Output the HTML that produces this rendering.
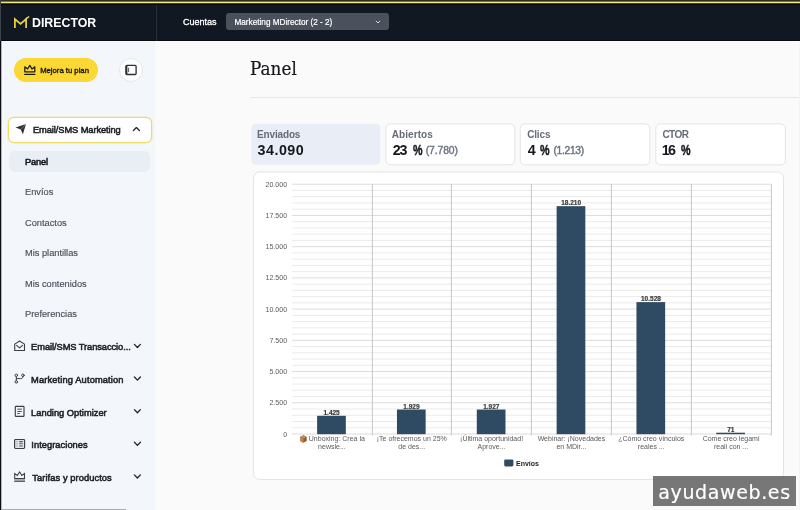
<!DOCTYPE html>
<html lang="es">
<head>
<meta charset="utf-8">
<title>MDirector - Panel</title>
<style>
*{box-sizing:border-box;margin:0;padding:0}
html,body{width:800px;height:510px;overflow:hidden;background:#fafafa}
body{will-change:transform;position:relative;font-family:"Liberation Sans",sans-serif;color:#1f2937;-webkit-font-smoothing:antialiased}
.abs{position:absolute}
.t{position:absolute;white-space:nowrap;line-height:1}
#header{left:0;top:0;width:800px;height:41px;background:#111822;border-bottom:1px solid #080b11}
#topline{left:0;top:0;width:800px;height:5px;background:linear-gradient(to bottom,#302d1d 0,#302d1d 1px,#777145 1px,#777145 2px,#efe790 2px,#efe790 3px,#514800 3px,#514800 4px,#060a05 4px,#060a05 5px)}
#hdiv{left:156px;top:5px;width:1px;height:36px;background:#2a303b}
#sidebar{left:1px;top:41px;width:154.3px;height:469px;background:#f3f6fa}
#leftedge{left:0;top:41px;width:2px;height:469px;background:linear-gradient(to right,#0c0c14 0,#0c0c14 1px,#b4b7bc 1px,#b4b7bc 2px)}
#leftedge2{left:0;top:0;width:1px;height:41px;background:#3d4149}
#select{left:226px;top:13px;width:163px;height:17.3px;background:#4b515c;border-radius:3px}
#upg{left:14px;top:58px;width:84px;height:24px;border-radius:12px;background:#fcd835}
#circ{left:119px;top:58px;width:24px;height:24px;border-radius:12px;background:#fff;border:1px solid #e3e6ea}
#navact{left:8px;top:117px;width:144px;height:26px;border-radius:6px;background:#fff;border:1px solid #f1d964;box-shadow:0 0 0 0.5px rgba(241,217,100,0.55)}
#navsel{left:9px;top:151px;width:141px;height:21px;border-radius:6px;background:#e9eef5}
.sub{font-size:9.25px;color:#4a505a;left:25px;-webkit-text-stroke:0.15px #4a505a;margin-top:0.6px}
.main{font-size:9.3px;color:#1e2126;-webkit-text-stroke:0.55px #1e2126;left:31.5px;margin-top:0.5px}
.cl{font-size:10px;font-weight:bold;color:#656b78;top:130.3px}
.cv{font-size:14.3px;font-weight:bold;color:#14171c;top:142.6px}
.pc{transform-origin:0 0;transform:scaleX(0.75);-webkit-text-stroke:0.45px #14171c}
.cs{font-size:10.3px;color:#6b7280;-webkit-text-stroke:0.4px #6b7280;top:146.4px}
#hr{left:250px;top:97px;width:550px;height:1px;background:#e5e7eb}
#wm{left:653px;top:476px;width:143px;height:30px;background:rgba(100,100,100,0.88)}
#wmt{font-family:"DejaVu Sans","Liberation Sans",sans-serif;font-size:19px;color:#fff;left:658.3px;top:483px;letter-spacing:0.62px;-webkit-text-stroke:0.2px #fff}
#scroll{left:1px;top:509px;width:125px;height:1px;background:#a9abae}
</style>
</head>
<body>
<div class="abs" id="header"></div>
<div class="abs" id="topline"></div>
<div class="abs" id="hdiv"></div>
<div class="abs" id="sidebar"></div>
<div class="abs" id="leftedge"></div>
<div class="abs" id="leftedge2"></div>

<!-- logo -->
<svg class="abs" style="left:13px;top:15px" width="18" height="15" viewBox="0 0 18 15">
 <path d="M1.9 13V4.2L7.5 9L13.1 4.2V13" fill="none" stroke="#f0d643" stroke-width="1.7" stroke-linejoin="miter"/>
 <path d="M12.6 4.1L16.2 1.5" fill="none" stroke="#f0d643" stroke-width="1.5"/>
</svg>
<div class="t" id="logo" style="left:31.5px;top:16.2px;font-size:13.5px;font-weight:bold;color:#fff;transform-origin:0 0;transform:scaleX(0.915)">DIRECTOR</div>

<div class="t" id="cuentas" style="left:183px;top:17.7px;font-size:9px;color:#fff;-webkit-text-stroke:0.3px #fff">Cuentas</div>
<div class="abs" id="select"></div>
<div class="t" id="seltext" style="left:234.5px;top:18.6px;font-size:8.2px;color:#fff;-webkit-text-stroke:0.2px #fff">Marketing MDirector (2 - 2)</div>
<svg class="abs" style="left:375px;top:19.5px" width="6" height="4" viewBox="0 0 6 4"><path d="M0.8 0.8L3 3L5.2 0.8" fill="none" stroke="#e5e7eb" stroke-width="0.9"/></svg>

<!-- upgrade button -->
<div class="abs" id="upg"></div>
<svg class="abs" style="left:24px;top:64px" width="12" height="12" viewBox="0 0 12 12">
 <path d="M0.8 7.8V2.8L3.6 5L5.8 1.4L8 5L10.8 2.8V7.8Z" fill="none" stroke="#17170a" stroke-width="1.2" stroke-linejoin="round"/>
 <path d="M0.2 10.4H11.4" stroke="#17170a" stroke-width="1.2"/>
</svg>
<div class="t" id="upgt" style="left:40.2px;top:66.5px;font-size:7.7px;color:#17170a;-webkit-text-stroke:0.35px #17170a">Mejora tu plan</div>
<div class="abs" id="circ"></div>
<svg class="abs" style="left:125px;top:64px" width="12" height="12" viewBox="0 0 12 12">
 <rect x="0.9" y="1.3" width="10.2" height="9.2" rx="1" fill="none" stroke="#2b2f36" stroke-width="1.3"/>
 <path d="M1.6 1.8V10" stroke="#2b2f36" stroke-width="1.6"/><path d="M3.6 3.7V8.1" stroke="#2b2f36" stroke-width="0.8"/>
</svg>

<!-- nav -->
<div class="abs" id="navact"></div>
<svg class="abs" style="left:15px;top:123px" width="12" height="12" viewBox="0 0 12 12">
 <path d="M0.5 4.5L11 1L7.9 11.2L5.7 6.6Z" fill="#2e3136"/>
 <path d="M5.7 6.6L11 1" stroke="#fff" stroke-opacity="0.55" stroke-width="0.6"/>
</svg>
<div class="t main" id="n0" style="left:33.0px;top:125.5px;letter-spacing:-0.09px">Email/SMS Marketing</div>

<div class="abs" id="navsel"></div>
<div class="t" id="s0" style="left:25.0px;top:157.5px;font-size:9.3px;color:#16181d;-webkit-text-stroke:0.55px #16181d;letter-spacing:-0.20px">Panel</div>
<div class="t sub" id="s1" style="top:187.5px">Envíos</div>
<div class="t sub" id="s2" style="top:218px">Contactos</div>
<div class="t sub" id="s3" style="top:248.5px">Mis plantillas</div>
<div class="t sub" id="s4" style="top:279px">Mis contenidos</div>
<div class="t sub" id="s5" style="top:309.5px">Preferencias</div>

<div class="t main" id="n1" style="left:31.1px;top:342px;letter-spacing:-0.07px">Email/SMS Transaccio...</div>
<div class="t main" id="n2" style="left:31.1px;top:375.5px;letter-spacing:0.13px">Marketing Automation</div>
<div class="t main" id="n3" style="left:31.1px;top:408.0px;letter-spacing:0.01px">Landing Optimizer</div>
<div class="t main" id="n4" style="left:31.3px;top:440.5px;letter-spacing:0.05px">Integraciones</div>
<div class="t main" id="n5" style="left:32.3px;top:473.5px;letter-spacing:0.08px">Tarifas y productos</div>

<!-- nav icons -->
<svg class="abs" id="navicons" style="left:0;top:100px" width="160" height="400" viewBox="0 100 160 400" fill="none" stroke-linecap="round" stroke-linejoin="round">
 <!-- envelope open -->
 <path d="M14.7 344.1L19.6 341L24.5 344.1V350.5H14.7Z" stroke="#3b3e43" stroke-width="1.1"/>
 <path d="M16.6 345.4L19.6 347.9L22.6 345.4" stroke="#3b3e43" stroke-width="1.1"/>
 <!-- branch -->
 <circle cx="16.3" cy="375.3" r="1.25" stroke="#3b3e43" stroke-width="1"/>
 <circle cx="22.9" cy="375.3" r="1.25" stroke="#3b3e43" stroke-width="1"/>
 <circle cx="16.3" cy="381.9" r="1.25" stroke="#3b3e43" stroke-width="1"/>
 <path d="M16.3 376.8V380.5M22.9 376.8C22.9 378.3 22 378.6 20.6 378.6H16.5" stroke="#3b3e43" stroke-width="1"/>
 <!-- landing -->
 <rect x="15.3" y="406.4" width="8.7" height="10" rx="0.7" stroke="#3b3e43" stroke-width="1.15"/>
 <path d="M17.4 409.2H21.8" stroke="#6b6e73" stroke-width="1.3" stroke-linecap="butt"/>
 <path d="M17.4 411.5H21.8M17.4 413.5H19.8" stroke="#3b3e43" stroke-width="0.9" stroke-linecap="butt"/>
 <!-- integraciones -->
 <rect x="14.6" y="439.5" width="10" height="9" rx="0.9" fill="#e4e5e7" stroke="#3b3e43" stroke-width="1.15"/>
 <path d="M16.3 441.6H17.6M16.3 443.8H17.6M16.3 446H17.6" stroke="#9a9da2" stroke-width="1" stroke-linecap="butt"/>
 <path d="M19.2 441.6H22.8M19.2 443.8H22.8M19.2 446H22.8" stroke="#5a5d62" stroke-width="1.1" stroke-linecap="butt"/>
 <!-- crown -->
 <path d="M14.7 478.6V473.6L17.3 475.5L19.6 472L21.9 475.5L24.5 473.6V478.6Z" stroke="#3b3e43" stroke-width="1.05" stroke-linejoin="miter"/>
 <path d="M14.2 479.7H25" stroke="#a9abae" stroke-width="1.2" stroke-linecap="butt"/>
 <path d="M14.2 481.2H25" stroke="#3b3e43" stroke-width="1.2" stroke-linecap="butt"/>
 <!-- chevrons -->
 <path d="M133.4 130.5L136.4 127.6L139.4 130.5" stroke="#22252a" stroke-width="1.35"/>
 <path d="M134.4 344.4L137.4 347.5L140.4 344.4" stroke="#22252a" stroke-width="1.35"/>
 <path d="M134.4 377L137.4 380.1L140.4 377" stroke="#22252a" stroke-width="1.35"/>
 <path d="M134.4 409.65L137.4 412.75L140.4 409.65" stroke="#22252a" stroke-width="1.35"/>
 <path d="M134.4 442.3L137.4 445.4L140.4 442.3" stroke="#22252a" stroke-width="1.35"/>
 <path d="M134.4 474.9L137.4 478L140.4 474.9" stroke="#22252a" stroke-width="1.35"/>
</svg>
<div class="abs" id="scroll"></div>

<!-- main -->
<div class="t" id="title" style="left:250.3px;top:59.8px;font-family:'DejaVu Serif','Liberation Serif',serif;font-size:18px;color:#16181d;-webkit-text-stroke:0.2px #16181d;transform-origin:0 0;transform:scaleX(0.935)">Panel</div>
<div class="abs" id="hr"></div>

<svg class="abs" id="cards" style="left:245px;top:118px" width="550" height="54" viewBox="245 118 550 54">
<rect x="251.5" y="123.8" width="128.8" height="41" rx="4.5" fill="#e9edf5"/>
<rect x="385.9" y="123.9" width="128.9" height="40.9" rx="4.5" fill="#fff" stroke="#e3e4e6" stroke-width="1"/>
<rect x="520.3" y="123.9" width="129.5" height="40.9" rx="4.5" fill="#fff" stroke="#e3e4e6" stroke-width="1"/>
<rect x="655.8" y="123.9" width="129.6" height="40.9" rx="4.5" fill="#fff" stroke="#e3e4e6" stroke-width="1"/>
</svg>
<div class="t cl" id="cl0" style="left:257.0px;letter-spacing:-0.15px">Enviados</div>
<div class="t cv" id="cv0" style="left:257.6px;letter-spacing:0.48px">34.090</div>
<div class="t cl" id="cl1" style="left:391.8px;letter-spacing:0.06px">Abiertos</div>
<div class="t cv" id="cv1" style="left:392.7px;letter-spacing:-1.18px">23</div><div class="t cv pc" id="cp1" style="left:412.5px">%</div>
<div class="t cs" id="cs1" style="left:425.7px;letter-spacing:-0.07px">(7.780)</div>
<div class="t cl" id="cl2" style="left:527.2px;letter-spacing:-0.16px">Clics</div>
<div class="t cv" id="cv2" style="left:527.7px">4</div><div class="t cv pc" id="cp2" style="left:539.5px">%</div>
<div class="t cs" id="cs2" style="left:553.5px;letter-spacing:-0.32px">(1.213)</div>
<div class="t cl" id="cl3" style="left:662.4px;letter-spacing:-0.53px">CTOR</div>
<div class="t cv" id="cv3" style="left:661.8px;letter-spacing:-1.82px">16</div><div class="t cv pc" id="cp3" style="left:681.3px">%</div>

<!--CHART-->
<svg class="abs" id="plot" style="left:250px;top:168px" width="540" height="316" viewBox="250 168 540 316" font-family="Liberation Sans, sans-serif">
<rect x="253.5" y="172" width="530" height="307.5" rx="6" fill="#fff" stroke="#e2e3e5" stroke-width="1"/>
<rect x="292.0" y="183.70" width="479.0" height="1" fill="#dcdcdc"/>
<rect x="292.0" y="189.94" width="479.0" height="1" fill="#ebebeb"/>
<rect x="292.0" y="196.19" width="479.0" height="1" fill="#ebebeb"/>
<rect x="292.0" y="202.44" width="479.0" height="1" fill="#ebebeb"/>
<rect x="292.0" y="208.68" width="479.0" height="1" fill="#ebebeb"/>
<rect x="292.0" y="214.92" width="479.0" height="1" fill="#dcdcdc"/>
<rect x="292.0" y="221.17" width="479.0" height="1" fill="#ebebeb"/>
<rect x="292.0" y="227.41" width="479.0" height="1" fill="#ebebeb"/>
<rect x="292.0" y="233.66" width="479.0" height="1" fill="#ebebeb"/>
<rect x="292.0" y="239.91" width="479.0" height="1" fill="#ebebeb"/>
<rect x="292.0" y="246.15" width="479.0" height="1" fill="#dcdcdc"/>
<rect x="292.0" y="252.39" width="479.0" height="1" fill="#ebebeb"/>
<rect x="292.0" y="258.64" width="479.0" height="1" fill="#ebebeb"/>
<rect x="292.0" y="264.88" width="479.0" height="1" fill="#ebebeb"/>
<rect x="292.0" y="271.13" width="479.0" height="1" fill="#ebebeb"/>
<rect x="292.0" y="277.38" width="479.0" height="1" fill="#dcdcdc"/>
<rect x="292.0" y="283.62" width="479.0" height="1" fill="#ebebeb"/>
<rect x="292.0" y="289.87" width="479.0" height="1" fill="#ebebeb"/>
<rect x="292.0" y="296.11" width="479.0" height="1" fill="#ebebeb"/>
<rect x="292.0" y="302.36" width="479.0" height="1" fill="#ebebeb"/>
<rect x="292.0" y="308.60" width="479.0" height="1" fill="#dcdcdc"/>
<rect x="292.0" y="314.85" width="479.0" height="1" fill="#ebebeb"/>
<rect x="292.0" y="321.09" width="479.0" height="1" fill="#ebebeb"/>
<rect x="292.0" y="327.34" width="479.0" height="1" fill="#ebebeb"/>
<rect x="292.0" y="333.58" width="479.0" height="1" fill="#ebebeb"/>
<rect x="292.0" y="339.82" width="479.0" height="1" fill="#dcdcdc"/>
<rect x="292.0" y="346.07" width="479.0" height="1" fill="#ebebeb"/>
<rect x="292.0" y="352.31" width="479.0" height="1" fill="#ebebeb"/>
<rect x="292.0" y="358.56" width="479.0" height="1" fill="#ebebeb"/>
<rect x="292.0" y="364.81" width="479.0" height="1" fill="#ebebeb"/>
<rect x="292.0" y="371.05" width="479.0" height="1" fill="#dcdcdc"/>
<rect x="292.0" y="377.29" width="479.0" height="1" fill="#ebebeb"/>
<rect x="292.0" y="383.54" width="479.0" height="1" fill="#ebebeb"/>
<rect x="292.0" y="389.78" width="479.0" height="1" fill="#ebebeb"/>
<rect x="292.0" y="396.03" width="479.0" height="1" fill="#ebebeb"/>
<rect x="292.0" y="402.27" width="479.0" height="1" fill="#dcdcdc"/>
<rect x="292.0" y="408.52" width="479.0" height="1" fill="#ebebeb"/>
<rect x="292.0" y="414.76" width="479.0" height="1" fill="#ebebeb"/>
<rect x="292.0" y="421.01" width="479.0" height="1" fill="#ebebeb"/>
<rect x="292.0" y="427.25" width="479.0" height="1" fill="#ebebeb"/>
<rect x="292.0" y="433.50" width="479.0" height="1" fill="#dcdcdc"/>
<rect x="371.85" y="184.2" width="1.0" height="251.30" fill="#c6c6c6"/>
<rect x="450.85" y="184.2" width="1.0" height="251.30" fill="#c6c6c6"/>
<rect x="530.85" y="184.2" width="1.0" height="251.30" fill="#c6c6c6"/>
<rect x="610.85" y="184.2" width="1.0" height="251.30" fill="#c6c6c6"/>
<rect x="690.85" y="184.2" width="1.0" height="251.30" fill="#c6c6c6"/>
<rect x="770.85" y="184.2" width="1.0" height="251.30" fill="#c6c6c6"/>
<text x="287.2" y="186.70" text-anchor="end" font-size="7.1" fill="#5c5c5c">20.000</text>
<text x="287.2" y="217.92" text-anchor="end" font-size="7.1" fill="#5c5c5c">17.500</text>
<text x="287.2" y="249.15" text-anchor="end" font-size="7.1" fill="#5c5c5c">15.000</text>
<text x="287.2" y="280.38" text-anchor="end" font-size="7.1" fill="#5c5c5c">12.500</text>
<text x="287.2" y="311.60" text-anchor="end" font-size="7.1" fill="#5c5c5c">10.000</text>
<text x="287.2" y="342.82" text-anchor="end" font-size="7.1" fill="#5c5c5c">7.500</text>
<text x="287.2" y="374.05" text-anchor="end" font-size="7.1" fill="#5c5c5c">5.000</text>
<text x="287.2" y="405.27" text-anchor="end" font-size="7.1" fill="#5c5c5c">2.500</text>
<text x="287.2" y="436.50" text-anchor="end" font-size="7.1" fill="#5c5c5c">0</text>
<rect x="317.12" y="415.80" width="28.7" height="18.40" fill="#2f4a63"/>
<text x="331.62" y="414.80" text-anchor="middle" font-size="6.5" font-weight="bold" fill="#3a3a3a" stroke="#3a3a3a" stroke-width="0.2">1.425</text>
<rect x="396.95" y="409.51" width="28.7" height="24.69" fill="#2f4a63"/>
<text x="411.45" y="408.51" text-anchor="middle" font-size="6.5" font-weight="bold" fill="#3a3a3a" stroke="#3a3a3a" stroke-width="0.2">1.929</text>
<rect x="476.78" y="409.53" width="28.7" height="24.67" fill="#2f4a63"/>
<text x="491.28" y="408.53" text-anchor="middle" font-size="6.5" font-weight="bold" fill="#3a3a3a" stroke="#3a3a3a" stroke-width="0.2">1.927</text>
<rect x="556.62" y="206.16" width="28.7" height="228.04" fill="#2f4a63"/>
<text x="571.12" y="205.16" text-anchor="middle" font-size="6.5" font-weight="bold" fill="#3a3a3a" stroke="#3a3a3a" stroke-width="0.2">18.210</text>
<rect x="636.45" y="302.11" width="28.7" height="132.09" fill="#2f4a63"/>
<text x="650.95" y="301.11" text-anchor="middle" font-size="6.5" font-weight="bold" fill="#3a3a3a" stroke="#3a3a3a" stroke-width="0.2">10.528</text>
<rect x="716.28" y="432.71" width="28.7" height="1.49" fill="#2f4a63"/>
<text x="730.78" y="431.71" text-anchor="middle" font-size="6.5" font-weight="bold" fill="#3a3a3a" stroke="#3a3a3a" stroke-width="0.2">71</text>
<g transform="translate(299.7,434.7) scale(1.08,1.14)"><title>📦</title><path d="M0.3 2L3.4 0.4L6.5 2V5.6L3.4 7.1L0.3 5.6Z" fill="#8e5e2d"/><path d="M0.3 2L3.4 3.4L6.5 2L3.4 0.4Z" fill="#b07e45"/><path d="M3.4 3.4V7.1L0.3 5.6V2Z" fill="#c28c50"/><path d="M1.8 1.2L4.9 2.7" stroke="#e8cfa8" stroke-width="0.5" fill="none"/></g>
<text x="336.82" y="441.1" text-anchor="middle" font-size="7" fill="#595959">Unboxing: Crea la</text>
<text x="331.92" y="448.6" text-anchor="middle" font-size="7" fill="#595959">newsle...</text>
<text x="411.75" y="441.1" text-anchor="middle" font-size="7" fill="#595959">¡Te ofrecemos un 25%</text>
<text x="411.75" y="448.6" text-anchor="middle" font-size="7" fill="#595959">de des...</text>
<text x="491.58" y="441.1" text-anchor="middle" font-size="7" fill="#595959">¡Última oportunidad!</text>
<text x="491.58" y="448.6" text-anchor="middle" font-size="7" fill="#595959">Aprove...</text>
<text x="571.42" y="441.1" text-anchor="middle" font-size="7" fill="#595959">Webinar: ¡Novedades</text>
<text x="571.42" y="448.6" text-anchor="middle" font-size="7" fill="#595959">en MDir...</text>
<text x="651.25" y="441.1" text-anchor="middle" font-size="7" fill="#595959">¿Cómo creo vínculos</text>
<text x="651.25" y="448.6" text-anchor="middle" font-size="7" fill="#595959">reales ...</text>
<text x="731.08" y="441.1" text-anchor="middle" font-size="7" fill="#595959">Come creo legami</text>
<text x="731.08" y="448.6" text-anchor="middle" font-size="7" fill="#595959">reali con ...</text>
<rect x="504.2" y="459.4" width="9.2" height="7" rx="1.3" fill="#2f4a63"/>
<text x="516" y="465.5" font-size="7" font-weight="bold" fill="#222">Envíos</text>
</svg>
<!--/CHART-->

<div class="abs" id="rstrip" style="left:799px;top:41px;width:1px;height:469px;background:#f3f4f4"></div>
<div class="abs" id="wm"></div>
<div class="t" id="wmt">ayudaweb.es</div>
</body>
</html>
